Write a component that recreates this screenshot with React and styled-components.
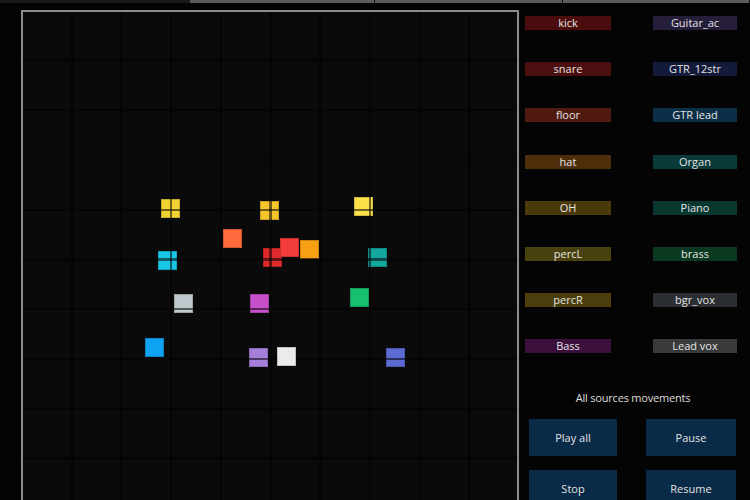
import styled, { createGlobalStyle } from 'styled-components';

const GlobalStyle = createGlobalStyle`
  html, body {
    margin: 0;
    padding: 0;
    background: #040404;
    overflow: hidden;
  }
  body {
    font-family: "Open Sans", "DejaVu Sans", sans-serif;
  }
`;

const sources = [
  ['kick', '#4b0c0d', 'Guitar_ac', '#261d3b'],
  ['snare', '#4b0f0f', 'GTR_12str', '#141a39'],
  ['floor', '#501a10', 'GTR lead', '#0b2f46'],
  ['hat', '#4d2e0b', 'Organ', '#093938'],
  ['OH', '#4a390a', 'Piano', '#083730'],
  ['percL', '#49410d', 'brass', '#0a3820'],
  ['percR', '#4a3e0d', 'bgr_vox', '#2b2e32'],
  ['Bass', '#3c0f3c', 'Lead vox', '#393a3b'],
];

// page coords of each source square (top-left); "over" ones sit above the grid
const squares = [
  { x: 161, y: 199, c: '#f2d233' },
  { x: 260, y: 201, c: '#f6c52b' },
  { x: 354, y: 197, c: '#fbe04a' },
  { x: 223, y: 229, c: '#ff6a3c', over: true },
  { x: 263, y: 248, c: '#df2a2c' },
  { x: 280, y: 238, c: '#f23b3b', over: true },
  { x: 300, y: 240, c: '#f7a012' },
  { x: 368, y: 248, c: '#13a7a0' },
  { x: 158, y: 251, c: '#18c6e6' },
  { x: 174, y: 294, c: '#bfc8cd' },
  { x: 250, y: 294, c: '#c74fc9' },
  { x: 350, y: 288, c: '#16c06f', over: true },
  { x: 145, y: 338, c: '#0fa1f2', over: true },
  { x: 249, y: 348, c: '#a67fd9' },
  { x: 277, y: 347, c: '#ebebeb', over: true },
  { x: 386, y: 348, c: '#5b6bd1' },
];

const CANVAS_X = 23;
const CANVAS_Y = 12;

const Page = styled.div`
  width: 750px;
  height: 500px;
  display: flex;
  flex-direction: column;
  overflow: hidden;
`;

const TopStrip = styled.div`
  height: 3px;
  display: flex;
  flex-shrink: 0;
`;

const Tab = styled.div`
  width: ${p => p.w}px;
  background: ${p => (p.active ? '#5c5c5c' : '#1a1a1a')};
  border-right: 1px solid #111;
`;

const Main = styled.div`
  display: flex;
  padding-top: 7px;
  flex: 1;
`;

const Canvas = styled.div`
  position: relative;
  margin-left: 21px;
  width: 494px;
  height: 520px;
  flex-shrink: 0;
  background: #0a0a0a;
  border: 2px solid #8c8c8c;
  border-bottom: none;
`;

const Square = styled.div`
  position: absolute;
  z-index: ${p => (p.over ? 2 : 0)};
  width: 19px;
  height: 19px;
  background: ${p => p.color};
  box-shadow: inset 0 0 0 1px rgba(0, 0, 0, 0.18);
`;

const Grid = styled.div`
  position: absolute;
  inset: 0;
  z-index: 1;
  pointer-events: none;
  background-image:
    repeating-linear-gradient(90deg, transparent 0, transparent 47.5px, rgba(0, 0, 0, 0.55) 47.5px, rgba(0, 0, 0, 0.55) 49.75px),
    repeating-linear-gradient(180deg, transparent 0, transparent 47.5px, rgba(0, 0, 0, 0.55) 47.5px, rgba(0, 0, 0, 0.55) 49.75px);
`;

const Side = styled.div`
  margin-left: 6px;
  width: 216px;
  display: flex;
  flex-direction: column;
  padding-top: 6px;
`;

const Labels = styled.div`
  display: grid;
  grid-template-columns: 86px 84px;
  column-gap: 42px;
  row-gap: 32.2px;
  grid-auto-rows: 14px;
`;

const Label = styled.div`
  background: ${p => p.color};
  color: #e4e4e4;
  font-size: 11px;
  line-height: 14px;
  text-align: center;
  white-space: nowrap;
  overflow: hidden;
`;

const Heading = styled.div`
  margin-top: 38px;
  color: #dedede;
  font-size: 11px;
  line-height: 14px;
  text-align: center;
  letter-spacing: -0.2px;
`;

const Buttons = styled.div`
  margin-top: 14px;
  padding-left: 4px;
  display: grid;
  grid-template-columns: 88px 90px;
  column-gap: 29px;
  row-gap: 14px;
  grid-auto-rows: 37px;
`;

const Button = styled.button`
  border: none;
  margin: 0;
  padding: 0;
  background: #0a2b47;
  color: #e2e2e2;
  font-family: "Open Sans", "DejaVu Sans", sans-serif;
  font-size: 11px;
`;

function App() {
  return (
    <Page>
      <GlobalStyle />
      <TopStrip>
        <Tab w={190} />
        <Tab w={185} active />
        <Tab w={188} active />
        <Tab w={187} active />
      </TopStrip>
      <Main>
        <Canvas>
          {squares.map((s, i) => (
            <Square
              key={i}
              color={s.c}
              over={s.over}
              style={{ left: s.x - CANVAS_X, top: s.y - CANVAS_Y }}
            />
          ))}
          <Grid />
        </Canvas>
        <Side>
          <Labels>
            {sources.map(([a, ca, b, cb]) => [
              <Label key={a} color={ca}>{a}</Label>,
              <Label key={b} color={cb}>{b}</Label>,
            ])}
          </Labels>
          <Heading>All sources movements</Heading>
          <Buttons>
            <Button>Play all</Button>
            <Button>Pause</Button>
            <Button>Stop</Button>
            <Button>Resume</Button>
          </Buttons>
        </Side>
      </Main>
    </Page>
  );
}

export default App;
